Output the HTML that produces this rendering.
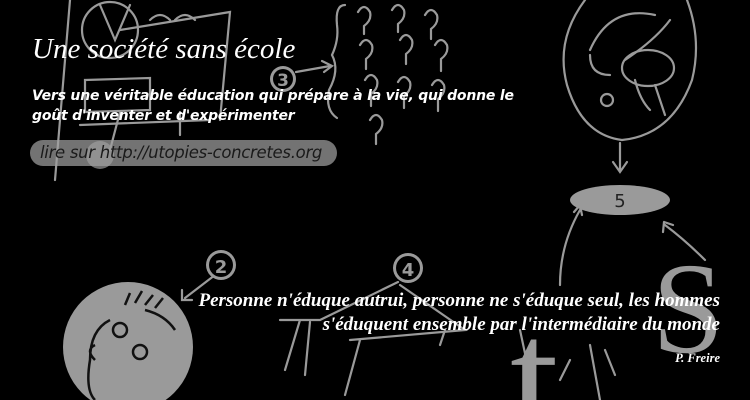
<!DOCTYPE html>
<html><head><meta charset="utf-8"><style>
html,body{margin:0;padding:0;background:#000;overflow:hidden;}
#w{position:relative;width:750px;height:400px;overflow:hidden;background:#000;}
svg{position:absolute;left:0;top:0;}
.t{position:absolute;color:#fff;white-space:nowrap;}
</style></head><body><div id="w">
<svg width="750" height="400" viewBox="0 0 750 400">
<g fill="none" stroke="#9a9a9a" stroke-width="2.2" stroke-linecap="round">
<path d="M70 0 L55 180 M120 30 L230 12 L220 120 M80 125 L210 120"/>
<circle cx="110" cy="30" r="28"/>
<path d="M100 5 L115 40 L130 5 M150 20 q10 -10 20 0 M175 20 q10 -10 20 0"/>
<path d="M85 80 L150 78 L150 110 L85 112 Z M120 112 L110 150 M180 112 L180 135"/>
<path d="M296 72 L330 66 M322 61 L332 66 L324 72"/>
<path d="M345 5 q-10 0 -8 20 q2 15 -5 30 q8 15 -3 35 q-4 20 8 28"/>
<path d="M358 12 q6 -10 12 0 q2 8 -6 14 v8 M392 10 q6 -10 12 0 q2 8 -6 14 v8 M425 15 q6 -10 12 0 q2 8 -6 14 v10 M360 45 q6 -10 12 0 q2 8 -6 14 v10 M400 40 q6 -10 12 0 q2 8 -6 14 v10 M435 45 q6 -10 12 0 q2 8 -6 14 v12 M365 80 q6 -10 12 0 q2 8 -6 14 v12 M398 82 q6 -10 12 0 q2 8 -6 14 v12 M432 85 q6 -10 12 0 q2 8 -6 14 v12 M370 120 q6 -10 12 0 q2 8 -6 14 v10"/>
<path d="M585 0 q-30 40 -18 85 q15 50 55 55 q50 -5 70 -60 q10 -40 -5 -80"/>
<path d="M590 50 q20 -45 65 -35 M610 75 q-20 0 -20 -20 M625 60 q30 -20 45 -40"/>
<ellipse cx="648" cy="68" rx="26" ry="18"/>
<path d="M635 80 q5 20 15 30 M655 85 l10 30"/>
<circle cx="607" cy="100" r="6"/>
<path d="M620 143 L620 170 M613 162 L620 172 L627 162"/>
<path d="M560 285 q0 -40 20 -75 M574 212 L580 205 L582 215 M705 260 q-20 -20 -40 -35 M664 222 L663 232 M664 222 L673 225"/>
<path d="M215 275 L185 298 M182 290 L182 300 L192 300"/>
<path d="M398 282 L320 320 L280 320 M400 285 L465 330 L350 340 M300 320 L285 370 M310 322 L305 375 M445 330 L440 345 M360 340 L345 395"/>
<path d="M520 330 L535 400 M590 345 L600 400 M605 350 l10 25 M560 380 l10 -20"/>
</g>
<g fill="#9a9a9a">
<circle cx="283" cy="79" r="13"/>
<circle cx="100" cy="155" r="14" opacity="0.7"/>
<circle cx="221" cy="265" r="15"/>
<circle cx="408" cy="268" r="15"/>
<ellipse cx="620" cy="200" rx="50" ry="15"/>
<circle cx="128" cy="347" r="65"/>
</g>
<g fill="#000" font-family="DejaVu Sans, sans-serif" font-weight="bold" text-anchor="middle">
<circle cx="283" cy="79" r="10"/><text x="283" y="86" fill="#9a9a9a" font-size="17">3</text>
<circle cx="221" cy="265" r="12"/><text x="221" y="273" fill="#9a9a9a" font-size="18">2</text>
<circle cx="408" cy="268" r="12"/><text x="408" y="276" fill="#9a9a9a" font-size="18">4</text>
<text x="620" y="207" fill="#222" font-size="18" font-weight="normal">5</text>
</g>
<g fill="none" stroke="#111" stroke-width="2.5">
<path d="M110 320 q-20 10 -20 40 q-5 30 5 40 M145 310 q20 5 30 20 M95 345 q-10 5 0 15"/>
<circle cx="120" cy="330" r="7"/><circle cx="140" cy="352" r="7"/>
<path d="M125 305 l5 -12 M135 303 l7 -12 M145 305 l8 -10 M155 308 l8 -10"/>
</g>
<g font-family="Liberation Serif, serif" fill="#9a9a9a">
<text x="652" y="352" font-size="130">S</text>
<text x="510" y="438" font-size="175">t</text>
</g>
</svg>
<div class="t" style="left:32px;top:33px;font:italic 29px 'Liberation Serif',serif;">Une société sans école</div>
<div class="t" style="left:32px;top:86px;font:italic bold 14px/20px 'DejaVu Sans',sans-serif;letter-spacing:-0.2px;">Vers une véritable éducation qui prépare à la vie, qui donne le<br>goût d'inventer et d'expérimenter</div>
<div class="t" style="left:30px;top:140px;width:307px;height:26px;border-radius:13px;background:rgba(160,160,160,0.72);color:#1a1a1a;font:italic 16.5px/26px 'DejaVu Sans',sans-serif;letter-spacing:-0.3px;text-indent:10px;">lire sur http://utopies-concretes.org</div>
<div class="t" style="right:30px;top:289px;text-align:right;font:italic bold 19px/24px 'Liberation Serif',serif;">Personne n'éduque autrui, personne ne s'éduque seul, les hommes<br>s'éduquent ensemble par l'intermédiaire du monde</div>
<div class="t" style="right:30px;top:351px;font:italic bold 12.5px 'Liberation Serif',serif;">P. Freire</div>
</div></body></html>
